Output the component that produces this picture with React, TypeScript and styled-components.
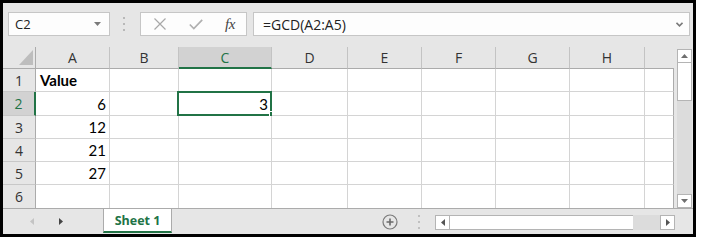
import React from 'react';
import styled, { createGlobalStyle } from 'styled-components';

const GREEN = '#217346';
const GRID = '#d4d4d4';
const EDGE = '#ababab';

const GlobalStyle = createGlobalStyle`
  html, body { margin: 0; padding: 0; background: #ffffff; }
  body { font-family: "Open Sans", "Liberation Sans", sans-serif; }
`;

const Frame = styled.div`
  width: 696px;
  height: 237px;
  box-sizing: border-box;
  border: 3px solid #000;
  background: #e6e6e6;
  display: flex;
  flex-direction: column;
  overflow: hidden;
`;

/* ---------- formula bar ---------- */
const FormulaBar = styled.div`
  height: 44px;
  flex-shrink: 0;
  box-sizing: border-box;
  padding: 9px 3px 0 5px;
  display: flex;
  align-items: flex-start;
`;

const Field = styled.div`
  height: 24px;
  box-sizing: border-box;
  border: 1px solid #c6c6c6;
  background: #fdfdfd;
  display: flex;
  align-items: center;
`;

const NameBox = styled(Field)`
  width: 102px;
  padding: 0 8px 0 6px;
  justify-content: space-between;
  font-size: 13px;
  color: #222;
`;

const Grip = styled.div`
  width: 30px;
  height: 24px;
  padding-right: 2px;
  box-sizing: border-box;
  display: flex;
  align-items: center;
  justify-content: center;
`;

const FxBox = styled(Field)`
  width: 107px;
`;

const FxButton = styled.div<{ $w: number }>`
  width: ${(p) => p.$w}px;
  height: 22px;
  display: flex;
  align-items: center;
  justify-content: center;
`;

const FxLabel = styled.span`
  font-family: "Liberation Serif", "DejaVu Serif", serif;
  font-style: italic;
  font-size: 15px;
  color: #444;
  letter-spacing: -0.5px;
`;

const FormulaInput = styled(Field)`
  flex: 1;
  margin-left: 6px;
  padding: 0 6px 0 9px;
  justify-content: space-between;
  font-size: 14px;
  color: #222;
`;

/* ---------- grid ---------- */
const GridArea = styled.div`
  height: 161px;
  flex-shrink: 0;
  display: flex;
`;

const Sheet = styled.div`
  width: 671px;
  display: grid;
  grid-template-columns: 33px 74px 69px 93px 76px 74px 74px 74px 75px 29px;
  grid-template-rows: 22px 23px 24px 23px 23px 23px 23px;
`;

const Corner = styled.div`
  box-sizing: border-box;
  border-right: 1px solid ${EDGE};
  border-bottom: 1px solid ${EDGE};
  display: flex;
  align-items: flex-end;
  justify-content: flex-end;
  padding: 0 2px 3px 0;
`;

const ColHead = styled.div<{ $active?: boolean; $edge?: boolean }>`
  box-sizing: border-box;
  background: ${(p) => (p.$active ? '#d2d2d2' : '#e6e6e6')};
  border-right: ${(p) => (p.$edge ? 'none' : '1px solid #c3c3c3')};
  border-bottom: ${(p) => (p.$active ? `2px solid ${GREEN}` : `1px solid ${EDGE}`)};
  display: flex;
  align-items: center;
  justify-content: center;
  font-size: 14px;
  color: ${(p) => (p.$active ? GREEN : '#333')};
`;

const RowHead = styled.div<{ $active?: boolean; $lastRow?: boolean }>`
  box-sizing: border-box;
  background: ${(p) => (p.$active ? '#d2d2d2' : '#e6e6e6')};
  border-right: ${(p) => (p.$active ? `2px solid ${GREEN}` : `1px solid ${EDGE}`)};
  border-bottom: ${(p) => (p.$lastRow ? 'none' : '1px solid #c8c8c8')};
  display: flex;
  align-items: center;
  justify-content: center;
  font-size: 14px;
  color: ${(p) => (p.$active ? GREEN : '#333')};
`;

const Cell = styled.div<{ $align?: 'left' | 'right'; $bold?: boolean; $edge?: boolean; $lastRow?: boolean }>`
  position: relative;
  box-sizing: border-box;
  background: #fff;
  border-right: 1px solid ${(p) => (p.$edge ? EDGE : GRID)};
  border-bottom: ${(p) => (p.$lastRow ? 'none' : `1px solid ${GRID}`)};
  display: flex;
  align-items: center;
  justify-content: ${(p) => (p.$align === 'right' ? 'flex-end' : 'flex-start')};
  padding: 0 3px 0 4px;
  font-family: Lato, "Open Sans", sans-serif;
  font-size: 15px;
  font-weight: ${(p) => (p.$bold ? 700 : 400)};
  color: #000;
`;

const Selection = styled.div`
  position: absolute;
  left: -2px;
  top: -1px;
  right: -1px;
  bottom: -1px;
  border: 2px solid ${GREEN};
  pointer-events: none;
`;

const FillHandle = styled.div`
  position: absolute;
  right: -5px;
  bottom: -3px;
  width: 7px;
  height: 7px;
  box-sizing: border-box;
  background: ${GREEN};
  border: 1px solid #fff;
`;

const VScroll = styled.div`
  width: 15px;
  margin-left: 3px;
  margin-right: 1px;
  padding-top: 2px;
  box-sizing: border-box;
  display: flex;
  flex-direction: column;
`;

const ScrollBtn = styled.div<{ $w?: number }>`
  width: ${(p) => (p.$w ? `${p.$w}px` : 'auto')};
  height: 15px;
  flex-shrink: 0;
  box-sizing: border-box;
  border: 1px solid #b4b4b4;
  background: #fff;
  display: flex;
  align-items: center;
  justify-content: center;
`;

const VBtn = styled(ScrollBtn)`
  height: 14px;
`;

const VTrack = styled.div`
  flex: 1;
  background: #dcdcdc;
  display: flex;
  flex-direction: column;
`;

const VThumb = styled.div`
  height: 38px;
  box-sizing: border-box;
  border: 1px solid #b4b4b4;
  border-top: none;
  background: #fff;
`;

/* ---------- tab bar ---------- */
const TabBar = styled.div`
  height: 26px;
  flex-shrink: 0;
  box-sizing: border-box;
  border-top: 1px solid ${EDGE};
  display: flex;
  align-items: flex-start;
`;

const NavArrows = styled.div`
  width: 100px;
  height: 25px;
  padding-left: 27px;
  box-sizing: border-box;
  display: flex;
  align-items: center;
  gap: 25px;
`;

const Tab = styled.div`
  width: 69px;
  height: 24px;
  box-sizing: border-box;
  background: #fff;
  border-left: 1px solid ${EDGE};
  border-right: 1px solid ${EDGE};
  border-bottom: 2px solid ${GREEN};
  display: flex;
  align-items: center;
  justify-content: center;
  font-size: 12.5px;
  font-weight: 700;
  color: ${GREEN};
`;

const Filler = styled.div`
  flex: 1;
`;

const RightGroup = styled.div`
  height: 25px;
  display: flex;
  align-items: center;
  padding-right: 18px;
`;

const DotsWrap = styled.div<{ $ml: number; $mr: number }>`
  margin-left: ${(p) => p.$ml}px;
  margin-right: ${(p) => p.$mr}px;
  display: flex;
`;

const HScroll = styled.div`
  width: 240px;
  height: 15px;
  margin-top: 1px;
  display: flex;
`;

const HThumb = styled.div`
  width: 183px;
  box-sizing: border-box;
  border-top: 1px solid #b4b4b4;
  border-bottom: 1px solid #b4b4b4;
  background: #fff;
`;

const HTrack = styled.div`
  flex: 1;
  background: #dcdcdc;
`;

/* ---------- drawings ---------- */
type Dir = 'up' | 'down' | 'left' | 'right';
const Tri = ({ dir, w, h, color }: { dir: Dir; w: number; h: number; color: string }) => {
  const pts =
    dir === 'down'
      ? `0,0 ${w},0 ${w / 2},${h}`
      : dir === 'up'
      ? `0,${h} ${w},${h} ${w / 2},0`
      : dir === 'left'
      ? `${w},0 ${w},${h} 0,${h / 2}`
      : `0,0 0,${h} ${w},${h / 2}`;
  return (
    <svg width={w} height={h} viewBox={`0 0 ${w} ${h}`}>
      <polygon points={pts} fill={color} />
    </svg>
  );
};

const Dots = ({ color }: { color: string }) => (
  <svg width="2" height="14" viewBox="0 0 2 14">
    <rect x="0" y="0" width="2" height="2" fill={color} />
    <rect x="0" y="6" width="2" height="2" fill={color} />
    <rect x="0" y="12" width="2" height="2" fill={color} />
  </svg>
);

const CrossIcon = () => (
  <svg width="12" height="12" viewBox="0 0 12 12">
    <path d="M0.5 0.5 L11.5 11.5 M11.5 0.5 L0.5 11.5" stroke="#a8a8a8" strokeWidth="1.2" fill="none" />
  </svg>
);

const CheckIcon = () => (
  <svg width="14" height="11" viewBox="0 0 14 11">
    <path d="M0.8 5.5 L4.8 9.5 L13.2 0.8" stroke="#b0b0b0" strokeWidth="1.7" fill="none" />
  </svg>
);

const Chevron = () => (
  <svg width="7" height="5" viewBox="0 0 7 5">
    <path d="M0.5 0.8 L3.5 3.8 L6.5 0.8" stroke="#7a7a7a" strokeWidth="1.6" fill="none" />
  </svg>
);

const PlusCircle = () => (
  <svg width="16" height="16" viewBox="0 0 16 16">
    <circle cx="8" cy="8" r="7" stroke="#7a7a7a" strokeWidth="1.2" fill="none" />
    <path d="M8 4.5 V11.5 M4.5 8 H11.5" stroke="#6a6a6a" strokeWidth="1.6" />
  </svg>
);

const SelectAll = () => (
  <svg width="14" height="15" viewBox="0 0 14 15">
    <polygon points="14,0 14,15 0,15" fill="#bdbdbd" />
  </svg>
);

/* ---------- data ---------- */
const columns = ['A', 'B', 'C', 'D', 'E', 'F', 'G', 'H', ''];
type CellData = { v: string; align?: 'left' | 'right'; bold?: boolean };
const rows: CellData[][] = [
  [{ v: 'Value', bold: true }],
  [{ v: '6', align: 'right' }, { v: '' }, { v: '3', align: 'right' }],
  [{ v: '12', align: 'right' }],
  [{ v: '21', align: 'right' }],
  [{ v: '27', align: 'right' }],
  [],
];
const activeCol = 2;
const activeRow = 1;

export default function App() {
  return (
    <>
      <GlobalStyle />
      <Frame>
        <FormulaBar>
          <NameBox>
            <span>C2</span>
            <Tri dir="down" w={7} h={4} color="#7a7a7a" />
          </NameBox>
          <Grip>
            <Dots color="#b8b8b8" />
          </Grip>
          <FxBox>
            <FxButton $w={37}>
              <CrossIcon />
            </FxButton>
            <FxButton $w={36}>
              <CheckIcon />
            </FxButton>
            <FxButton $w={32}>
              <FxLabel>fx</FxLabel>
            </FxButton>
          </FxBox>
          <FormulaInput>
            <span>=GCD(A2:A5)</span>
            <Chevron />
          </FormulaInput>
        </FormulaBar>

        <GridArea>
          <Sheet>
            <Corner>
              <SelectAll />
            </Corner>
            {columns.map((c, i) => (
              <ColHead key={`h${i}`} $active={i === activeCol} $edge={i === columns.length - 1}>
                {c}
              </ColHead>
            ))}
            {rows.map((row, r) => (
              <React.Fragment key={`r${r}`}>
                <RowHead $active={r === activeRow} $lastRow={r === rows.length - 1}>
                  {r + 1}
                </RowHead>
                {columns.map((_, c) => {
                  const d = row[c];
                  const selected = r === activeRow && c === activeCol;
                  return (
                    <Cell
                      key={`c${r}-${c}`}
                      $align={d?.align}
                      $bold={d?.bold}
                      $edge={c === columns.length - 1}
                      $lastRow={r === rows.length - 1}
                    >
                      {d?.v}
                      {selected && (
                        <>
                          <Selection />
                          <FillHandle />
                        </>
                      )}
                    </Cell>
                  );
                })}
              </React.Fragment>
            ))}
          </Sheet>
          <VScroll>
            <VBtn>
              <Tri dir="up" w={7} h={4} color="#6f6f6f" />
            </VBtn>
            <VTrack>
              <VThumb />
            </VTrack>
            <VBtn>
              <Tri dir="down" w={7} h={4} color="#6f6f6f" />
            </VBtn>
          </VScroll>
        </GridArea>

        <TabBar>
          <NavArrows>
            <Tri dir="left" w={4} h={7} color="#c4c4c4" />
            <Tri dir="right" w={4} h={7} color="#444" />
          </NavArrows>
          <Tab>Sheet 1</Tab>
          <Filler />
          <RightGroup>
            <PlusCircle />
            <DotsWrap $ml={20} $mr={15}>
              <Dots color="#c0c0c0" />
            </DotsWrap>
            <HScroll>
              <ScrollBtn $w={15}>
                <Tri dir="left" w={4} h={7} color="#555" />
              </ScrollBtn>
              <HThumb />
              <HTrack />
              <ScrollBtn $w={15}>
                <Tri dir="right" w={4} h={7} color="#555" />
              </ScrollBtn>
            </HScroll>
          </RightGroup>
        </TabBar>
      </Frame>
    </>
  );
}
